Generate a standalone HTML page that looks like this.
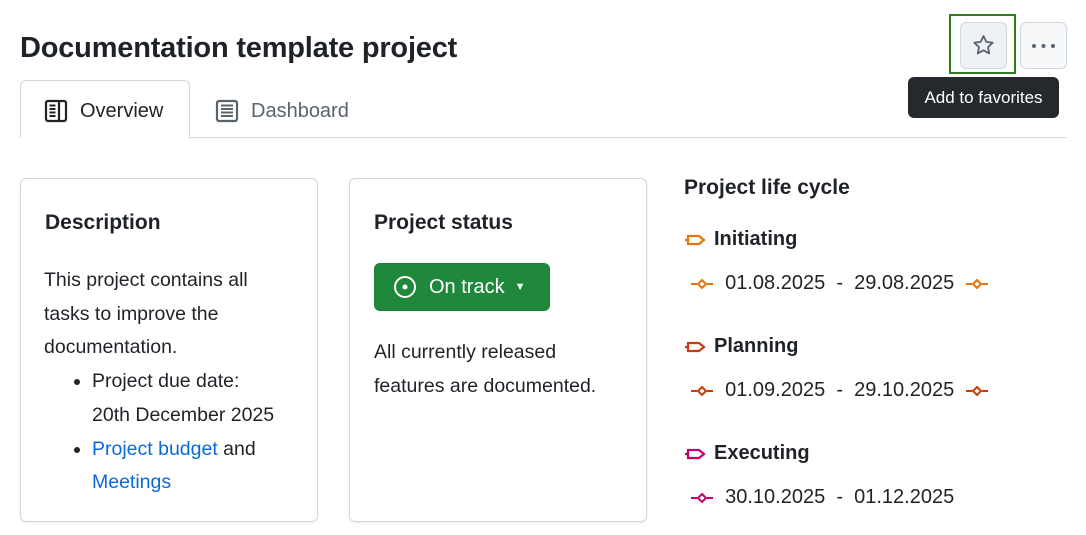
<!DOCTYPE html>
<html><head><style>
*{box-sizing:border-box;margin:0;padding:0}
body{width:1086px;height:535px;background:#fff;font-family:"Liberation Sans",sans-serif;color:#1f2328;position:relative;overflow:hidden}
.a{position:absolute}
h1{position:absolute;left:20px;top:32px;font-size:29px;font-weight:bold;letter-spacing:-0.2px}
.tab{position:absolute;top:82px;height:58px;font-size:20px;display:flex;align-items:center}
.card{position:absolute;top:178px;height:344px;border:1px solid #d0d7de;border-radius:6px;box-shadow:0 1px 2px rgba(0,0,0,.08)}
.card h2{position:absolute;left:24px;top:32px;font-size:21px;font-weight:bold}
.t{font-size:19.5px;line-height:33.7px}
a{color:#0969da;text-decoration:none}
.ph{position:absolute;left:684px;font-size:20px;font-weight:bold;display:flex;align-items:center;gap:6px}
.dt{position:absolute;left:690px;font-size:20px;display:flex;align-items:center;white-space:pre}
</style></head><body>
<h1>Documentation template project</h1>
<div class="a" style="left:949px;top:14px;width:67px;height:60px;border:2px solid #2e7d1f"></div>
<div class="a" style="left:960px;top:22px;width:47px;height:47px;border:1px solid #d0d7de;border-radius:6px;background:#eff2f5">
<svg width="45" height="45" viewBox="0 0 45 45"><path d="M22.5 13l2.8 5.9 6.4.8-4.7 4.4 1.2 6.3-5.7-3.1-5.7 3.1 1.2-6.3-4.7-4.4 6.4-.8z" fill="none" stroke="#59636e" stroke-width="1.8" stroke-linejoin="round"/></svg></div>
<div class="a" style="left:1020px;top:22px;width:47px;height:47px;border:1px solid #d0d7de;border-radius:6px;background:#f6f8fa">
<svg width="45" height="45"><circle cx="13" cy="23" r="2" fill="#59636e"/><circle cx="22.5" cy="23" r="2" fill="#59636e"/><circle cx="32" cy="23" r="2" fill="#59636e"/></svg></div>
<div class="a" style="left:908px;top:77px;width:151px;height:41px;background:#25292e;border-radius:6px;color:#fff;font-size:17px;line-height:41px;text-align:center">Add to favorites</div>

<div class="a" style="left:20px;top:80px;width:170px;height:58px;border:1px solid #d0d7de;border-bottom:none;border-radius:6px 6px 0 0;background:#fff"></div>
<div class="a" style="left:189px;top:137px;width:877px;height:1px;background:#d0d7de"></div>
<div class="tab" style="left:44px">
<svg width="24" height="24" viewBox="0 0 24 24" style="margin-right:12px"><rect x="2" y="2" width="20" height="20" rx="2" fill="none" stroke="#1f2328" stroke-width="2.2"/><line x1="15" y1="2" x2="15" y2="22" stroke="#1f2328" stroke-width="2.2"/><path d="M5.5 6.5h6M5.5 10h6M5.5 13.5h6M5.5 17h6" stroke="#1f2328" stroke-width="2"/></svg>Overview</div>
<div class="tab" style="left:215px;color:#59636e">
<svg width="24" height="24" viewBox="0 0 24 24" style="margin-right:12px"><rect x="2" y="2" width="20" height="20" rx="2" fill="none" stroke="#59636e" stroke-width="2.2"/><path d="M6 6.5h12M6 10h12M6 13.5h12M6 17h12" stroke="#59636e" stroke-width="2"/></svg>Dashboard</div>

<div class="card" style="left:20px;width:298px"><h2>Description</h2>
<div class="t a" style="left:23px;top:85px;width:235px">This project contains all tasks to improve the documentation.
<ul style="margin-left:48px;width:210px">
<li>Project due date:<br>20th December 2025</li>
<li><a>Project budget</a> and <a>Meetings</a></li></ul></div></div>

<div class="card" style="left:349px;width:298px"><h2>Project status</h2>
<div class="a" style="left:24px;top:84px;width:176px;height:48px;background:#1f883d;border:1px solid #1a7f37;border-radius:6px;color:#fff;font-size:20px;display:flex;align-items:center;padding-left:18px">
<svg width="24" height="24" viewBox="0 0 24 24" style="margin-right:12px"><circle cx="12" cy="12" r="10" fill="none" stroke="#fff" stroke-width="2"/><circle cx="12" cy="12" r="2.5" fill="#fff"/></svg>On track<span style="margin-left:10px;font-size:11px">▼</span></div>
<div class="t a" style="left:24px;top:157px">All currently released<br>features are documented.</div></div>

<div class="a" style="left:684px;top:176px;font-size:21px;font-weight:bold">Project life cycle</div>

<div class="ph" style="top:228px"><svg width="24" height="14"><path d="M1 7h3M4 3h11l5 4-5 4H4z" fill="none" stroke="#e5760b" stroke-width="2.2"/></svg>Initiating</div>
<div class="dt" style="top:272px"><svg width="24" height="14"><path d="M1 7h6M17 7h6M12 3l4 4-4 4-4-4z" fill="none" stroke="#e5760b" stroke-width="2"/></svg>  01.08.2025  -  29.08.2025  <svg width="24" height="14"><path d="M1 7h6M17 7h6M12 3l4 4-4 4-4-4z" fill="none" stroke="#e5760b" stroke-width="2"/></svg></div>

<div class="ph" style="top:335px"><svg width="24" height="14"><path d="M1 7h3M4 3h11l5 4-5 4H4z" fill="none" stroke="#cc3a0e" stroke-width="2.2"/></svg>Planning</div>
<div class="dt" style="top:379px"><svg width="24" height="14"><path d="M1 7h6M17 7h6M12 3l4 4-4 4-4-4z" fill="none" stroke="#cc3a0e" stroke-width="2"/></svg>  01.09.2025  -  29.10.2025  <svg width="24" height="14"><path d="M1 7h6M17 7h6M12 3l4 4-4 4-4-4z" fill="none" stroke="#cc3a0e" stroke-width="2"/></svg></div>

<div class="ph" style="top:442px"><svg width="24" height="14"><path d="M1 7h3M4 3h11l5 4-5 4H4z" fill="none" stroke="#c4006c" stroke-width="2.2"/></svg>Executing</div>
<div class="dt" style="top:486px"><svg width="24" height="14"><path d="M1 7h6M17 7h6M12 3l4 4-4 4-4-4z" fill="none" stroke="#c4006c" stroke-width="2"/></svg>  30.10.2025  -  01.12.2025</div>
</body></html>
